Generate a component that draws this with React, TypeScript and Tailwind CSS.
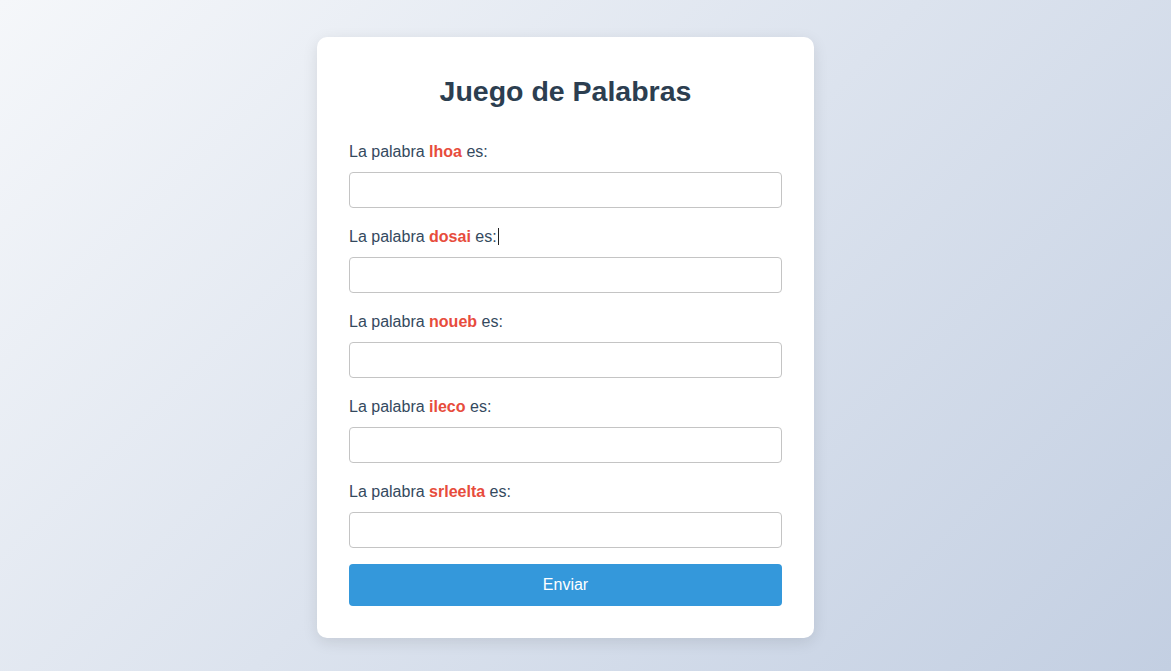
import React from "react";

const words = ["lhoa", "dosai", "noueb", "ileco", "srleelta"];

export default function App() {
  return (
    <div
      className="w-[1171px] h-[671px] overflow-hidden bg-[linear-gradient(135deg,#f5f7fa_0%,#c3cfe2_100%)] pt-[37px] pl-[317px]"
      style={{ fontFamily: '"Liberation Sans", Arial, sans-serif' }}
    >
      <div className="w-[497px] bg-white rounded-[10px] shadow-[0_4px_15px_rgba(0,0,0,0.1)] px-8 pt-[38px] pb-[32px]">
        <h1 className="text-[28.5px] leading-[32px] font-bold text-[#2c3e50] text-center mb-[33px]">
          Juego de Palabras
        </h1>
        {words.map((w, i) => (
          <div key={w} className={i === words.length - 1 ? "mb-4" : "mb-[17px]"}>
            <label className="relative block text-[16px] leading-6 text-[#34495e] mb-2">
              La palabra <span className="font-bold text-[#e74c3c]">{w}</span> es:
              {i === 1 && (
                <span className="inline-block align-middle w-px h-[17px] bg-[#222] ml-px mt-[-3px]" />
              )}
            </label>
            <input
              type="text"
              className="block w-full h-9 border border-[#c4c4c4] rounded-[4px] px-2 text-[16px] bg-white outline-none"
            />
          </div>
        ))}
        <button className="block w-full h-[42px] bg-[#3498db] text-white text-[16px] rounded-[4px]">
          Enviar
        </button>
      </div>
    </div>
  );
}
